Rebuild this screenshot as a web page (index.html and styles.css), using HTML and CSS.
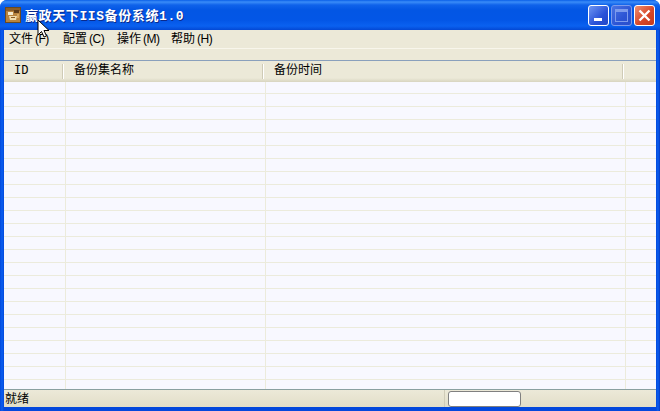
FILE: index.html
```html
<!DOCTYPE html>
<html lang="zh-CN">
<head>
    <meta charset="UTF-8">
    <title>嬴政天下IIS备份系统1.0</title>
    <link rel="stylesheet" href="styles.css">
</head>
<body>
    <div class="window">
        <!-- title bar -->
        <div class="titlebar">
            <svg class="app-icon" width="16" height="16" viewBox="0 0 16 16">
                <rect x="0" y="0" width="16" height="16" fill="#6b4a22"/>
                <rect x="1" y="1" width="14" height="14" fill="#b8843f"/>
                <rect x="1" y="1" width="14" height="3" fill="#8d5f2a"/>
                <path d="M3 5h5v3H3z" fill="#f4ead0"/>
                <path d="M9 3h5v3H9z" fill="#5b3a1a"/>
                <path d="M4 9h8l-1 4H5z" fill="#f0dcae"/>
                <path d="M6 10h4v1H6z" fill="#8a5a26"/>
                <path d="M12 7h2v4h-2z" fill="#d9a860"/>
            </svg>
            <div class="title">嬴政天下IIS备份系统1.0</div>
            <div class="win-buttons">
                <div class="win-btn btn-min"><span class="min-bar"></span></div>
                <div class="win-btn btn-max"><span class="max-box"></span></div>
                <div class="win-btn btn-close">
                    <svg width="15" height="15" viewBox="0 0 15 15">
                        <path d="M2.500 2.500l10 10M12.500 2.500l-10 10" stroke="#fff" stroke-width="2.400" fill="none"/>
                    </svg>
                </div>
            </div>
        </div>

        <div class="client">
            <div class="menubar">
                <span class="menu-item">文件<i>(F)</i></span>
                <span class="menu-item">配置<i>(C)</i></span>
                <span class="menu-item">操作<i>(M)</i></span>
                <span class="menu-item">帮助<i>(H)</i></span>
            </div>
            <div class="toolbar"></div>

            <div class="list">
                <div class="list-head">
                    <div class="head-cell col-id">ID</div>
                    <div class="head-cell col-name">备份集名称</div>
                    <div class="head-cell col-time">备份时间</div>
                    <div class="head-cell col-rest"></div>
                </div>
                <div class="list-body" id="list-body"></div>
            </div>

            <div class="statusbar">
                <div class="status-text">就绪</div>
                <div class="status-progress"></div>
            </div>
        </div>
    </div>

    <!-- mouse pointer caught in the screenshot -->
    <svg class="cursor" width="13" height="20" viewBox="0 0 13 20">
        <path d="M1 1v15l3.500-3.500L7 18l2.500-1L7 11.500h5z" fill="#fff" stroke="#000" stroke-width="1"/>
    </svg>

    <script>
        const listBody = document.getElementById("list-body");
        for (let i = 0; i < 24; i++) {
            const row = document.createElement("div");
            row.className = "row";
            row.innerHTML = '<div class="col-id"></div><div class="col-name"></div><div class="col-time"></div><div class="col-rest"></div>';
            listBody.appendChild(row);
        }
    </script>
</body>
</html>
```

FILE: styles.css
```css
html, body {
    margin: 0;
    padding: 0;
    width: 660px;
    height: 411px;
    overflow: hidden;
    background: #fff;
}

.window {
    width: 660px;
    height: 411px;
    display: flex;
    flex-direction: column;
    box-sizing: border-box;
    background: linear-gradient(to right, #0348dc 0, #0a5ef0 2px, #0348dc 4px, #0348dc 656px, #0a5ef0 658px, #0238c4 660px);
    border-radius: 7px 7px 0 0;
    font-family: "Liberation Mono", "Noto Sans CJK SC", monospace;
    font-size: 12px;
    color: #000;
    overflow: hidden;
}

.titlebar {
    height: 30px;
    flex: none;
    display: flex;
    align-items: center;
    padding: 0 5px;
    box-sizing: border-box;
    background: linear-gradient(to bottom, #0a5fe8 0, #3a8cf8 2px, #0f62ea 5px, #0356e4 10px, #0356e6 20px, #0a61f0 26px, #0348d4 30px);
}

.app-icon {
    flex: none;
}

.title {
    margin: 0 0 2px 4px;
    flex: 1;
    font-family: "Liberation Mono", "Noto Sans CJK SC", monospace;
    font-weight: bold;
    font-size: 13px;
    letter-spacing: 0.6px;
    color: #fff;
    text-shadow: 1px 1px 0 #0a2a8c;
    white-space: nowrap;
}

.win-buttons {
    display: flex;
    gap: 2px;
    margin-top: 1px;
}

.win-btn {
    width: 21px;
    height: 21px;
    box-sizing: border-box;
    border: 1px solid #fff;
    border-radius: 3px;
    display: flex;
    align-items: center;
    justify-content: center;
}

.btn-min {
    background: linear-gradient(135deg, #6f96f2, #2a52d8 60%, #2248c8);
    align-items: flex-end;
    justify-content: flex-start;
    padding: 0 0 4px 5px;
}

.min-bar {
    width: 8px;
    height: 3px;
    background: #fff;
}

.btn-max {
    background: linear-gradient(135deg, #4a74e4, #2c54d4 60%, #2a50cc);
    border-color: #7d9bec;
}

.max-box {
    width: 11px;
    height: 9px;
    border: 1px solid #7d9bec;
    border-top-width: 3px;
}

.btn-close {
    background: linear-gradient(135deg, #ee9070, #d8482a 55%, #c43a1c);
}

.client {
    flex: 1;
    margin: 0 4px 4px;
    display: flex;
    flex-direction: column;
    background: #ece9d8;
    min-height: 0;
}

.menubar {
    height: 19px;
    flex: none;
    display: flex;
    align-items: center;
    box-sizing: border-box;
    padding-bottom: 2px;
    border-bottom: 1px solid #f8f6ec;
}

.menu-item {
    width: 54px;
    padding-left: 5px;
    box-sizing: border-box;
    white-space: nowrap;
}

.menu-item i {
    font-family: "Liberation Sans", sans-serif;
    font-style: normal;
    margin-left: 2px;
    letter-spacing: -0.5px;
}

.toolbar {
    height: 11px;
    flex: none;
}

.list {
    flex: 1;
    min-height: 0;
    display: flex;
    flex-direction: column;
    border-top: 1px solid #8aa0bc;
    border-bottom: 1px solid #8aa0a0;
    background: #f8f8ff;
}

.list-head {
    height: 21px;
    flex: none;
    display: flex;
    background: linear-gradient(to bottom, #ece9d8 0, #ece9d8 17px, #e2dfcc 19px, #d8d4c0 21px);
}

.head-cell {
    box-sizing: border-box;
    line-height: 21px;
    padding-left: 10px;
    background-image: linear-gradient(to right, #cfcbb6 1px, #fff 1px);
    background-size: 2px 15px;
    background-position: right 3px;
    background-repeat: no-repeat;
}

.col-id { width: 60px; flex: none; }
.col-name { width: 200px; flex: none; }
.col-time { width: 360px; flex: none; }
.col-rest { flex: 1; }

.list-head .col-rest {
    background: none;
}

.list-body {
    flex: 1;
    min-height: 0;
    overflow: hidden;
}

.row {
    height: 13px;
    display: flex;
    box-sizing: border-box;
    border-bottom: 1px solid #ecebdc;
}

.row:first-child {
    height: 12px;
}

.row > div {
    box-sizing: border-box;
    height: 13px;
    border-right: 1px solid #ecebdc;
}

.row > .col-id { width: 62px; }
.row > .col-name { width: 200px; }
.row > .col-time { width: 360px; }
.row > .col-rest { border-right: none; }

.statusbar {
    height: 17px;
    flex: none;
    display: flex;
    background: linear-gradient(to bottom, #ece9d8, #e2dec8);
}

.status-text {
    width: 441px;
    flex: none;
    box-sizing: border-box;
    padding: 2px 0 0 1px;
    line-height: 17px;
    border-right: 1px solid #d0ccb8;
}

.status-progress {
    width: 73px;
    height: 16px;
    margin-left: 3px;
    margin-top: 1px;
    box-sizing: border-box;
    background: #fff;
    border: 1px solid #808080;
    border-radius: 3px;
}

.cursor {
    position: absolute;
    left: 37px;
    top: 19px;
}
```
